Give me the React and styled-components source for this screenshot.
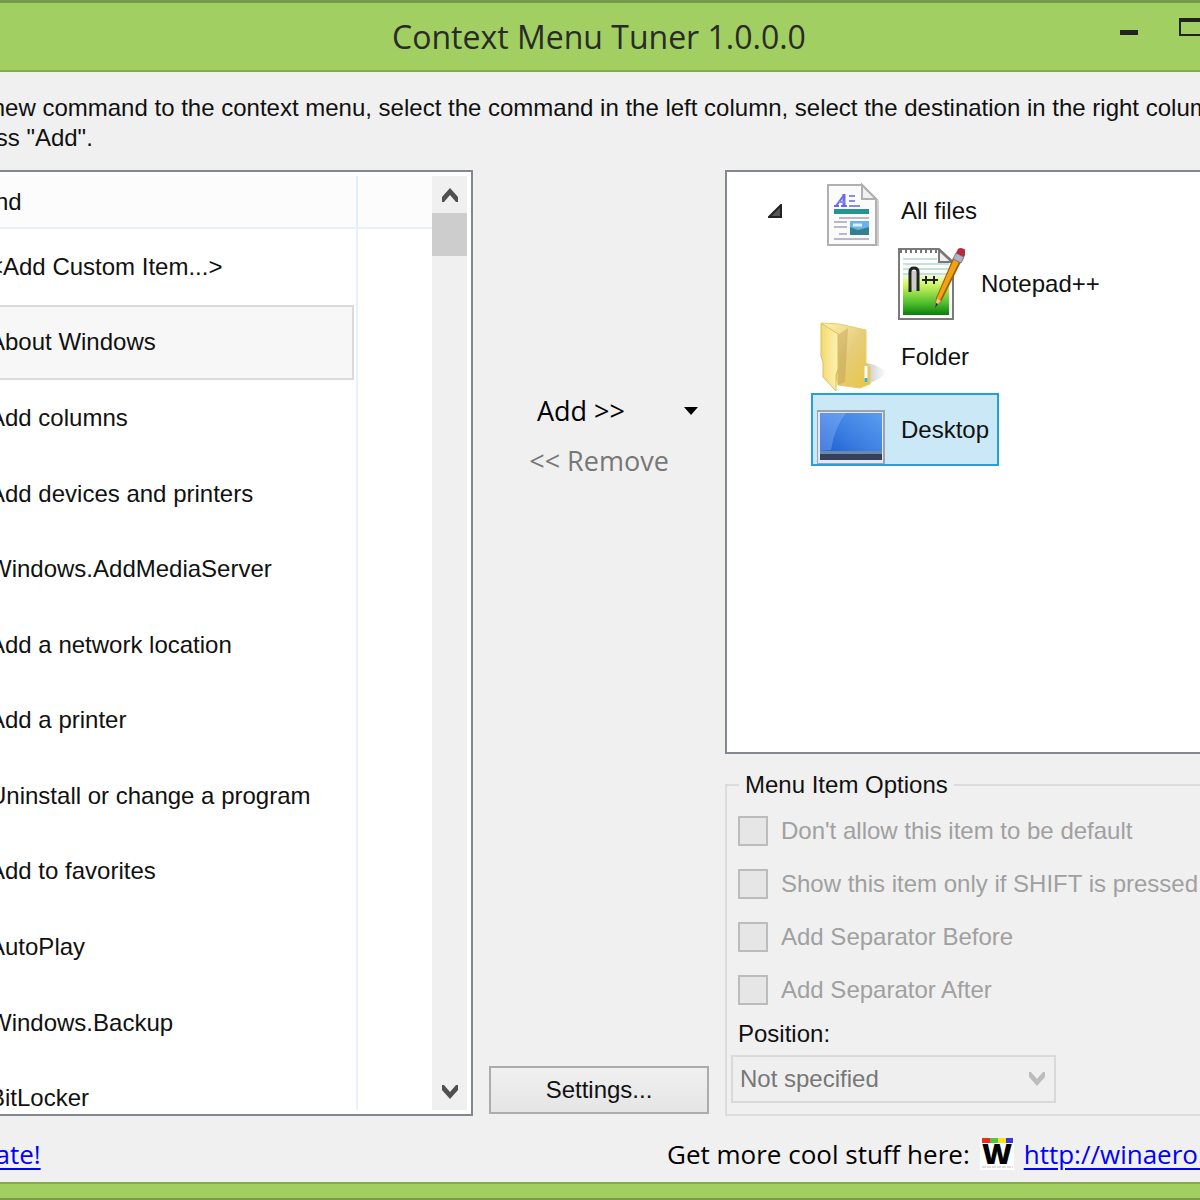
import React from "react";
import styled, { createGlobalStyle } from "styled-components";

const commands = [
  "<Add Custom Item...>",
  "About Windows",
  "Add columns",
  "Add devices and printers",
  "Windows.AddMediaServer",
  "Add a network location",
  "Add a printer",
  "Uninstall or change a program",
  "Add to favorites",
  "AutoPlay",
  "Windows.Backup",
  "BitLocker",
];

const options = [
  "Don't allow this item to be default",
  "Show this item only if SHIFT is pressed",
  "Add Separator Before",
  "Add Separator After",
];

const Chevron = ({ down, color = "#505050" }) => (
  <svg width="18" height="16" viewBox="0 0 18 16" aria-hidden="true">
    <path
      d={down ? "M1 1v5l8 9 8-9V1h-2l-6 7-6-7z" : "M1 15v-5l8-9 8 9v5h-2l-6-7-6 7z"}
      fill={color}
    />
  </svg>
);

const FileIcon = () => (
  <svg width="72" height="72" viewBox="1 -1 72 72" aria-hidden="true">
    <path d="M17 11h36l14 14v45H17z" fill="#cfcfcf" />
    <path d="M16 9h34l14 14v46H16z" fill="#fbfbfb" stroke="#b0b0b0" strokeWidth="2" />
    <path d="M50 9v14h14z" fill="#f1f1f1" stroke="#b0b0b0" strokeWidth="2" />
    <path d="M22 30h5M29 30h6" stroke="#6b68ee" strokeWidth="2" />
    <path d="M24 30l8-11" fill="none" stroke="#6b68ee" strokeWidth="2" />
    <path d="M32 18v12" stroke="#6b68ee" strokeWidth="3" />
    <path d="M27 26h6M37 20h6M37 25h6M37 30h11" fill="none" stroke="#8a88f2" strokeWidth="2" />
    <path d="M22 33h35v5H22z" fill="#279292" />
    <path d="M27 42h30M22 46h13M22 51h13M27 58h8M22 63h35" stroke="#b9b9cb" strokeWidth="2" />
    <path d="M38 45h19v14H38z" fill="#69b4ec" />
    <path d="M38 51l8 3 11-3v8H38z" fill="#35808e" />
    <path d="M41 49h9" stroke="#d9f2ff" strokeWidth="3" />
  </svg>
);

const NotepadIcon = () => (
  <svg width="72" height="74" viewBox="-3 1 72 74" aria-hidden="true">
    <defs>
      <linearGradient id="paper" x1="0" y1="0" x2="0" y2="1">
        <stop offset="0" stopColor="#fff" />
        <stop offset=".3" stopColor="#f8ffec" />
        <stop offset=".5" stopColor="#cff45c" />
        <stop offset=".8" stopColor="#4fc02e" />
        <stop offset="1" stopColor="#087d0b" />
      </linearGradient>
    </defs>
    <path d="M3 3h40l14 13v57H3z" fill="#fff" stroke="#7a7a7a" strokeWidth="2" />
    <path d="M7 9h37l9 8v52H7z" fill="url(#paper)" />
    <path d="M7 13h34M7 18h46M7 23h46M7 28h46" stroke="#c9dee4" strokeWidth="2" />
    <path d="M4 5h38" stroke="#777" strokeWidth="4" strokeDasharray="2 3" />
    <path d="M43 4v12h13z" fill="#eee" stroke="#777" strokeWidth="2" />
    <path d="M18 25v19" stroke="#ccc" strokeWidth="5" />
    <path d="M14 46V26q0-4 4-4t4 4v19" fill="none" stroke="#222" strokeWidth="3" />
    <path d="M26 34h8M30 30v8M34 34h8M38 30v8" stroke="#222" strokeWidth="2" />
    <path d="M57 12l8 4-20 40-6 5 1-9z" fill="#a35c08" />
    <path d="M58 13l5 3-19 38-3-2z" fill="#f0a313" />
    <path d="M41 52l4 3-6 6z" fill="#e7c998" />
    <path d="M40 57l2 1-3 4z" fill="#222" />
    <path d="M60 7l8 4-3 6-8-4z" fill="#aeb4c6" stroke="#70758b" />
    <path d="M62 3q2-2 6 0t2 4l-2 4-8-4z" fill="#b72d3d" />
  </svg>
);

const FolderIcon = () => (
  <svg width="72" height="74" viewBox="0 0 72 74" aria-hidden="true">
    <defs>
      <linearGradient id="folder" x1="0" y1="0" x2="1" y2="1">
        <stop offset="0" stopColor="#fff2ac" />
        <stop offset=".5" stopColor="#e6cd7c" />
        <stop offset="1" stopColor="#e7c545" />
      </linearGradient>
      <linearGradient id="flap" x1="0" y1="0" x2="1" y2="0">
        <stop offset="0" stopColor="#f2d96f" />
        <stop offset="1" stopColor="#fff3b4" />
      </linearGradient>
      <linearGradient id="shade" x1="0" y1="0" x2="1" y2="0">
        <stop offset="0" stopColor="#777" />
        <stop offset="1" stopColor="#999" stopOpacity="0" />
      </linearGradient>
    </defs>
    <path d="M50 42l12 3 12 7q-10 10-24 13H30z" fill="url(#shade)" />
    <path d="M9 3l17 1 27 6v33l4 4v17l-10 4-22-3z" fill="url(#folder)" stroke="#e9cc69" />
    <path d="M25 15l10-7-3 54-7 3z" fill="#b9994a" opacity=".4" />
    <path d="M8 3l17 11v35l-2 6v16L10 57V42L8 36z" fill="url(#flap)" stroke="#dbbd5c" />
    <path d="M53 46v16" stroke="#fff" strokeWidth="3" />
    <path d="M53 58v4" stroke="#52a6bc" strokeWidth="3" />
  </svg>
);

const DesktopIcon = () => (
  <svg width="72" height="72" viewBox="-1 -1 72 72" aria-hidden="true">
    <defs>
      <linearGradient id="screen" x1="0" y1="1" x2="1" y2="0">
        <stop offset="0" stopColor="#1757ca" />
        <stop offset=".5" stopColor="#3c7fe2" />
        <stop offset="1" stopColor="#5a9df0" />
      </linearGradient>
    </defs>
    <path d="M3 15h68v54H3z" fill="#9aa2b4" />
    <path d="M4 17h65v51H4z" fill="#e5e8f1" />
    <path d="M6 18h62v47H6z" fill="url(#screen)" />
    <path d="M6 18h26Q21 31 17 55l-11 1z" fill="#a9caff" opacity=".3" />
    <path d="M6 56h62v3H6z" fill="#7187aa" />
    <path d="M6 59h62v6H6z" fill="#34415b" />
  </svg>
);

const WinaeroLogo = () => (
  <svg width="34" height="32" viewBox="0 0 34 32" aria-hidden="true">
    <path d="M0 0h34v32H0z" fill="#fff" />
    <path d="M2 0h8v5H2z" fill="#f02b20" />
    <path d="M10 0h8v5h-8z" fill="#54c443" />
    <path d="M18 0h8v5h-8z" fill="#f2e51b" />
    <path d="M26 0h7v5h-7z" fill="#3c36e6" />
    <text x="17" y="26" textAnchor="middle" fontFamily="Open Sans" fontSize="29" fontWeight="800">
      W
    </text>
    <path d="M2 29h31" stroke="#bbb" strokeDasharray="4 1" />
  </svg>
);

const App = () => {
  return (
    <Page>
      <GlobalStyle />
      <Window>
        <TitleBar>
          <h1>Context Menu Tuner 1.0.0.0</h1>
          <WindowButtons>
            <button aria-label="Minimize">
              <svg width="20" height="30" viewBox="0 0 20 30">
                <path d="M1 19h18v5H1z" fill="#222" />
              </svg>
            </button>
            <button aria-label="Maximize">
              <svg width="28" height="30" viewBox="0 0 28 30">
                <path d="M1 8h26v16H1z" fill="none" stroke="#222" strokeWidth="2" />
                <path d="M0 7h28v4H0z" fill="#222" />
              </svg>
            </button>
          </WindowButtons>
        </TitleBar>
        <Body>
          <Intro>
            To add a new command to the context menu, select the command in the left column, select the
            destination in the right column
            <br />
            finally press "Add".
          </Intro>
          <Columns>
            <CommandBox>
              <CommandList>
                <ListHeader>Command</ListHeader>
                <ul>
                  {commands.map((name, i) => (
                    <CommandRow key={name} $selected={i === 1}>
                      {name}
                    </CommandRow>
                  ))}
                </ul>
              </CommandList>
              <ScrollBar>
                <button aria-label="Scroll up">
                  <Chevron />
                </button>
                <Thumb />
                <button aria-label="Scroll down">
                  <Chevron down />
                </button>
              </ScrollBar>
            </CommandBox>
            <Actions>
              <AddRow>
                <FlatButton>Add &gt;&gt;</FlatButton>
                <ArrowButton aria-label="More add choices">
                  <svg width="14" height="8" viewBox="0 0 14 8">
                    <path d="M0 0h14L7 8z" fill="#000" />
                  </svg>
                </ArrowButton>
              </AddRow>
              <FlatButton disabled>&lt;&lt; Remove</FlatButton>
              <SettingsButton>Settings...</SettingsButton>
            </Actions>
            <RightColumn>
              <Tree>
                <TreeRow>
                  <Expander aria-label="Collapse">
                    <svg width="14" height="14" viewBox="0 0 14 14">
                      <path d="M13 1v12H1z" fill="#555" stroke="#222" strokeWidth="2" />
                    </svg>
                  </Expander>
                  <TreeItem>
                    <FileIcon />
                    All files
                  </TreeItem>
                </TreeRow>
                <TreeRow $level={1}>
                  <TreeItem>
                    <NotepadIcon />
                    Notepad++
                  </TreeItem>
                </TreeRow>
                <TreeRow>
                  <TreeItem>
                    <FolderIcon />
                    Folder
                  </TreeItem>
                </TreeRow>
                <TreeRow>
                  <TreeItem $selected>
                    <DesktopIcon />
                    Desktop
                  </TreeItem>
                </TreeRow>
              </Tree>
              <Options>
                <legend>Menu Item Options</legend>
                {options.map((label) => (
                  <Option key={label}>
                    <input type="checkbox" disabled />
                    {label}
                  </Option>
                ))}
                <PositionLabel htmlFor="position">Position:</PositionLabel>
                <SelectBox>
                  <select id="position" disabled>
                    <option>Not specified</option>
                  </select>
                  <Chevron down color="#bcbcbc" />
                </SelectBox>
              </Options>
            </RightColumn>
          </Columns>
          <Footer>
            <a href="#donate">Donate!</a>
            <Site>
              Get more cool stuff here:
              <WinaeroLogo />
              <a href="http://winaero.com">http://winaero.com</a>
            </Site>
          </Footer>
        </Body>
      </Window>
    </Page>
  );
};

export default App;

const GlobalStyle = createGlobalStyle`
  * {
    box-sizing: border-box;
  }
  body {
    margin: 0;
    font: 24px/30px "Liberation Sans", Arial, sans-serif;
    color: #111;
    background: #f0f0f0;
  }
  button,
  select {
    font: inherit;
    color: inherit;
  }
  button {
    padding: 0;
    border: 0;
    background: none;
  }
  svg {
    display: block;
    flex-shrink: 0;
  }
`;
const Page = styled.div`
  overflow: hidden;
`;
/* the window is wider than the viewport on both sides */
const Window = styled.div`
  display: flex;
  flex-direction: column;
  height: 100vh;
  min-height: 1000px;
  margin: 0 -125px 0 -127px;
  white-space: nowrap;
`;
const TitleBar = styled.header`
  display: grid;
  grid-template-columns: 1fr auto 1fr;
  align-items: center;
  height: 72px;
  border-top: 3px solid #7a9a4b;
  border-bottom: 2px solid #86ab4b;
  background: #a2cf61;
  h1 {
    grid-column: 2;
    margin: 0;
    font: 400 32px/40px "Open Sans", sans-serif;
    color: #2a2a2a;
  }
`;
const WindowButtons = styled.div`
  display: flex;
  justify-content: flex-end;
  align-self: start;
  gap: 40px;
  padding: 8px 118px 0 0;
`;
const Body = styled.main`
  display: flex;
  flex-direction: column;
  flex: 1;
  min-height: 0;
  padding: 21px 14px 0 14px;
  border-bottom: 2px solid #7a9a4b;
  box-shadow: inset 0 -14px #a2cf61, inset 0 -16px #86ab4b;
`;
const Intro = styled.p`
  margin: 0 0 17px;
  padding-left: 6px;
`;
const Columns = styled.div`
  display: grid;
  grid-template-columns: 1fr 252px 1fr;
  flex: 1;
  min-height: 0;
`;
const CommandBox = styled.section`
  display: flex;
  min-height: 0;
  padding: 4px;
  border: 2px solid #828790;
  background: #fff;
`;
const CommandList = styled.div`
  display: flex;
  flex-direction: column;
  flex: 1;
  overflow: hidden;
  background: linear-gradient(#e6f1fb, #e6f1fb) right 74px top / 2px 100% no-repeat;
  ul {
    display: flex;
    flex-direction: column;
    flex: 1;
    margin: 0 0 -26px;
    padding: 0;
    list-style: none;
  }
`;
const ListHeader = styled.div`
  padding: 11px 18px 10px;
  border-bottom: 2px solid #e6f1fb;
  background: rgba(0, 0, 0, 0.01);
`;
const CommandRow = styled.li`
  display: flex;
  align-items: center;
  flex: 1;
  margin-right: 78px;
  padding-left: 94px;
  border: 2px solid ${(props) => (props.$selected ? "#dadada" : "transparent")};
  background: ${(props) => (props.$selected ? "#f7f7f7" : "transparent")};
`;
const ScrollBar = styled.div`
  display: flex;
  flex-direction: column;
  width: 35px;
  background: #f0f0f0;
  button {
    display: grid;
    place-items: center;
    height: 37px;
  }
  button:last-child {
    margin-top: auto;
  }
`;
const Thumb = styled.div`
  height: 43px;
  background: #cdcdcd;
`;
const Actions = styled.section`
  display: flex;
  flex-direction: column;
  align-items: center;
  padding: 225px 16px 2px;
`;
const AddRow = styled.div`
  display: flex;
  align-self: stretch;
  button:first-child {
    flex: 1;
  }
`;
const FlatButton = styled.button`
  height: 32px;
  margin-bottom: 18px;
  font-family: "Open Sans", sans-serif;
  font-size: 27px;
  color: ${(props) => (props.disabled ? "#777" : "#000")};
`;
const ArrowButton = styled.button`
  display: grid;
  place-items: center;
  width: 36px;
  height: 32px;
`;
const SettingsButton = styled.button`
  align-self: stretch;
  height: 48px;
  margin-top: auto;
  border: 2px solid #acacac;
  background: linear-gradient(#f0f0f0, #e5e5e5);
`;
const RightColumn = styled.section`
  display: flex;
  flex-direction: column;
  gap: 16px;
  min-width: 0;
`;
const Tree = styled.div`
  flex: 1;
  padding: 2px 2px 2px 84px;
  border: 2px solid #828790;
  background: #fff;
`;
const TreeRow = styled.div`
  position: relative;
  display: flex;
  height: 73px;
  padding-left: ${(props) => (props.$level ? "80px" : "0")};
`;
const Expander = styled.button`
  position: absolute;
  left: -43px;
  top: 30px;
`;
const TreeItem = styled.div`
  display: flex;
  align-items: center;
  gap: 16px;
  padding-right: 8px;
  border: 2px solid ${(props) => (props.$selected ? "#26a0da" : "transparent")};
  background: ${(props) => (props.$selected ? "#cbe8f6" : "transparent")};
`;
const Options = styled.fieldset`
  display: flex;
  flex-direction: column;
  align-items: flex-start;
  min-width: 0;
  margin: 0;
  padding: 16px 4px 11px;
  border: 2px solid #dcdcdc;
  legend {
    margin-left: 8px;
    padding: 0 6px;
  }
`;
const Option = styled.label`
  display: flex;
  align-items: center;
  gap: 13px;
  margin: 0 7px 23px;
  color: #a0a0a0;
  input {
    appearance: none;
    width: 30px;
    height: 30px;
    margin: 0;
    border: 2px solid #bcbcbc;
    background: #e6e6e6;
  }
  &:nth-of-type(4) {
    margin-bottom: 14px;
  }
`;
const PositionLabel = styled.label`
  margin: 0 7px 6px;
`;
const SelectBox = styled.div`
  display: grid;
  grid-template-columns: 1fr 28px;
  align-items: center;
  width: 325px;
  height: 48px;
  select {
    grid-area: 1 / 1 / 2 / 3;
    height: 48px;
    padding: 0 7px;
    appearance: none;
    border: 2px solid #d9d9d9;
    border-radius: 0;
    background: #efefef;
    color: #777;
    opacity: 1;
  }
  svg {
    grid-area: 1 / 2;
    z-index: 1;
  }
`;
const Footer = styled.footer`
  display: flex;
  justify-content: space-between;
  align-items: center;
  height: 84px;
  padding: 0 54px 8px 58px;
  margin-bottom: -2px;
  font-family: "Open Sans", sans-serif;
  font-size: 26px;
  color: #000;
  a {
    color: #0000ff;
    text-underline-offset: 4px;
  }
`;
const Site = styled.div`
  display: flex;
  align-items: center;
  gap: 10px;
`;
